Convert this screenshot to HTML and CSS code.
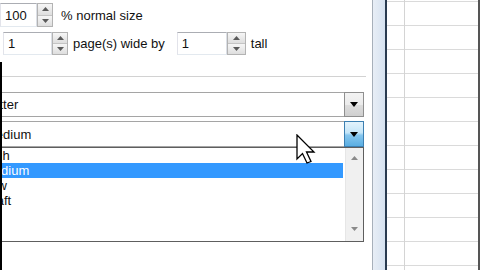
FILE: index.html
```html
<!DOCTYPE html>
<html>
<head>
<meta charset="utf-8">
<link rel="stylesheet" href="styles.css">
</head>
<body>
<div class="screen">
  <div class="dialog">
    <div class="content">
      <div class="row r1">
        <div class="input in1">100</div>
        <div class="spin sp1">
          <span><svg width="7" height="4" viewBox="0 0 7 4"><path d="M0 4L3.5 0L7 4Z" fill="#5a5a5a"/></svg></span>
          <span><svg width="7" height="4" viewBox="0 0 7 4"><path d="M0 0L3.5 4L7 0Z" fill="#5a5a5a"/></svg></span>
        </div>
        <span class="label lab1">% normal size</span>
      </div>
      <div class="row r2">
        <div class="input in2">1</div>
        <div class="spin sp2">
          <span><svg width="7" height="4" viewBox="0 0 7 4"><path d="M0 4L3.5 0L7 4Z" fill="#5a5a5a"/></svg></span>
          <span><svg width="7" height="4" viewBox="0 0 7 4"><path d="M0 0L3.5 4L7 0Z" fill="#5a5a5a"/></svg></span>
        </div>
        <span class="label lab2">page(s) wide by</span>
        <div class="input in3">1</div>
        <div class="spin sp3">
          <span><svg width="7" height="4" viewBox="0 0 7 4"><path d="M0 4L3.5 0L7 4Z" fill="#5a5a5a"/></svg></span>
          <span><svg width="7" height="4" viewBox="0 0 7 4"><path d="M0 0L3.5 4L7 0Z" fill="#5a5a5a"/></svg></span>
        </div>
        <span class="label lab3">tall</span>
      </div>
      <div class="group-end"></div>
      <div class="combo c1">
        <span class="val">Letter</span>
        <span class="btn"><svg width="8" height="5" viewBox="0 0 8 5"><path d="M0 0H8L4 5Z" fill="#000"/></svg></span>
      </div>
      <div class="combo c2">
        <span class="val">Medium</span>
        <span class="btn hot"><svg width="8" height="5" viewBox="0 0 8 5"><path d="M0 0H8L4 5Z" fill="#000"/></svg></span>
      </div>
      <div class="list">
        <ul class="items">
          <li>High</li>
          <li class="sel">Medium</li>
          <li>Low</li>
          <li>Draft</li>
        </ul>
        <div class="scroll">
          <svg width="7" height="4" viewBox="0 0 7 4"><path d="M0 4L3.5 0L7 4Z" fill="#8a8a8a"/></svg>
          <svg width="7" height="4" viewBox="0 0 7 4"><path d="M0 0L3.5 4L7 0Z" fill="#8a8a8a"/></svg>
        </div>
      </div>
    </div>
    <div class="edge"></div>
    <svg class="cursor" width="20" height="31" viewBox="0 0 20 31">
      <path d="M1 1 L1 25 L6.5 19.5 L11 29 L15 27.5 L10.5 18 L18 18 Z" fill="#fff" stroke="#000" stroke-width="1.3" stroke-linejoin="miter"/>
    </svg>
  </div>
  <div class="frame"></div>
  <div class="dark"></div>
  <div class="sheet">
    <div class="col-a"></div>
    <div class="col-b"></div>
  </div>
</div>
</body>
</html>
```

FILE: styles.css
```css
html, body {
  margin: 0;
  padding: 0;
}
body {
  width: 480px;
  height: 270px;
  overflow: hidden;
  background: #fff;
  font-family: "Liberation Sans", Arial, sans-serif;
  font-size: 13px;
  color: #111;
}
.screen {
  display: flex;
  width: 480px;
  height: 270px;
}
.dialog {
  position: relative;
  width: 372px;
  flex: none;
  background: #fff;
  border-right: 1px solid #a7b0ba;
  overflow: hidden;
}
.content {
  display: flex;
  flex-direction: column;
  padding-top: 3px;
}
.row {
  display: flex;
  align-items: center;
  height: 24px;
}
.r2 {
  margin-top: 5px;
  height: 23px;
  padding-left: 3px;
}
.input {
  box-sizing: border-box;
  height: 100%;
  border: 1px solid #abadb3;
  border-color: #abadb3 #dbdfe6 #e3e9ef #e2e3ea;
  background: #fff;
  display: flex;
  align-items: center;
  padding-left: 4px;
}
.in1 { width: 37px; }
.in2 { width: 49px; }
.in3 { width: 50px; }
.spin {
  box-sizing: border-box;
  height: 100%;
  display: flex;
  flex-direction: column;
  border: 1px solid #b3b3b3;
}
.sp1 { width: 16px; }
.sp2 { width: 16px; }
.sp3 { width: 19px; }
.spin span {
  flex: 1;
  display: flex;
  align-items: center;
  justify-content: center;
  background: linear-gradient(#f6f6f6, #dedede);
}
.spin span + span {
  border-top: 1px solid #c4c4c4;
}
.lab1 { margin-left: 8px; }
.lab2 { margin-left: 5px; margin-right: 12px; }
.lab3 { margin-left: 5px; }
.group-end {
  margin-top: 21px;
  width: 366px;
  height: 0;
  border-bottom: 1px solid #d2d2d2;
  box-shadow: 0 1px 0 #fff;
}
.combo {
  margin-left: -20px;
  width: 384px;
  box-sizing: border-box;
  display: flex;
  align-items: center;
  border: 1px solid #a5a5a5;
  background: #fff;
}
.c1 {
  margin-top: 15px;
  height: 25px;
}
.c2 {
  margin-top: 4px;
  height: 26px;
}
.val {
  flex: 1;
  padding-left: 4px;
}
.btn {
  align-self: stretch;
  width: 20px;
  margin: -1px -1px -1px 0;
  box-sizing: border-box;
  border: 1px solid #8f8f8f;
  display: flex;
  align-items: center;
  justify-content: center;
  background: linear-gradient(#f3f3f3 0%, #ebebeb 50%, #dddddd 51%, #cfcfcf 100%);
}
.btn.hot {
  border-color: #3c7fb1;
  background: linear-gradient(#e3f3fc 0%, #c4e5f8 45%, #86c6ee 55%, #5aaee2 100%);
}
.list {
  margin-left: -20px;
  width: 384px;
  height: 95px;
  box-sizing: border-box;
  border: 1px solid #5e5e5e;
  display: flex;
  background: #fff;
}
.items {
  flex: 1;
  margin: 0;
  padding: 0;
  list-style: none;
}
.items li {
  height: 15px;
  line-height: 15px;
  padding-left: 2px;
}
.items li.sel {
  background: #3399ff;
  color: #fff;
  margin-right: 2px;
}
.scroll {
  width: 18px;
  box-sizing: border-box;
  background: #f0f0f0;
  border-left: 1px solid #e6e6e6;
  display: flex;
  flex-direction: column;
  justify-content: space-between;
  align-items: center;
  padding: 8px 0 10px;
}
.edge {
  position: absolute;
  left: 0;
  top: 62px;
  width: 2px;
  height: 208px;
  background: #000;
}
.cursor {
  position: absolute;
  left: 296px;
  top: 134px;
}
.frame {
  width: 12px;
  flex: none;
  background: linear-gradient(to right, #e8eef6, #d6e2f0);
}
.dark {
  width: 2px;
  flex: none;
  background: #2a3b50;
}
.sheet {
  flex: 1;
  display: flex;
  background-image: repeating-linear-gradient(to bottom, #dadada 0, #dadada 1px, #fff 1px, #fff 24px);
  background-position: 0 1px;
  border-right: 2px solid #555;
}
.col-a {
  width: 17px;
  border-right: 1px solid #d4d4d4;
}
.col-b {
  flex: 1;
}
```
